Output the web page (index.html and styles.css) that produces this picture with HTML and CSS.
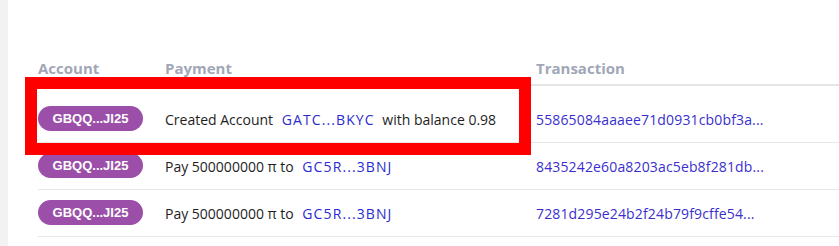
FILE: index.html
```html
<!DOCTYPE html>
<html>
<head>
<meta charset="utf-8">
<link rel="stylesheet" href="styles.css">
</head>
<body>
<div class="page">
  <div class="strip"></div>
  <div class="main">
    <div class="table">
      <div class="row head">
        <div class="cell">Account</div>
        <div class="cell">Payment</div>
        <div class="cell">Transaction</div>
      </div>
      <div class="row first">
        <div class="cell"><span class="badge">GBQQ...JI25</span></div>
        <div class="cell text">Created Account <a class="link">GATC...BKYC</a> with balance 0.98</div>
        <div class="cell text"><a class="hash">55865084aaaee71d0931cb0bf3a...</a></div>
      </div>
      <div class="row">
        <div class="cell"><span class="badge">GBQQ...JI25</span></div>
        <div class="cell text">Pay 500000000 π to <a class="link">GC5R...3BNJ</a></div>
        <div class="cell text"><a class="hash">8435242e60a8203ac5eb8f281db...</a></div>
      </div>
      <div class="row">
        <div class="cell"><span class="badge">GBQQ...JI25</span></div>
        <div class="cell text">Pay 500000000 π to <a class="link">GC5R...3BNJ</a></div>
        <div class="cell text"><a class="hash">7281d295e24b2f24b79f9cffe54...</a></div>
      </div>
    </div>
  </div>
  <div class="highlight"></div>
</div>
</body>
</html>
```

FILE: styles.css
```css
html, body {
  margin: 0;
  padding: 0;
  background: #ffffff;
}
.page {
  position: relative;
  display: flex;
  height: 246px;
  overflow: hidden;
  font-family: "Open Sans", Lato, sans-serif;
}
.strip {
  width: 8px;
  background: #f2f2f2;
  flex: none;
}
.main {
  flex: 1;
  padding: 51px 0 0 30px;
}
.row {
  display: grid;
  grid-template-columns: 127px 371px 1fr;
  align-items: center;
  border-bottom: 1px solid #e8e8e8;
  padding: 10px 0 11px;
  font-size: 14px;
  color: #1e1e1e;
}
.row .text {
  padding-top: 2px;
}
.row.head {
  height: 35px;
  padding: 0;
  box-sizing: border-box;
  border-bottom: 2px solid #e6e6e6;
  font-size: 15px;
  font-weight: 700;
  color: #a1a7b6;
}
.row.first {
  padding-top: 20px;
}
.badge {
  display: inline-block;
  width: 105px;
  height: 25px;
  line-height: 25px;
  border-radius: 13px;
  background: #9b4fa8;
  color: #ffffff;
  font-family: "Liberation Sans", Arial, sans-serif;
  font-weight: 700;
  font-size: 13px;
  text-align: center;
}
.link {
  color: #2b2bcf;
  margin: 0 4px 0 5px;
  letter-spacing: 1.1px;
}
.hash {
  color: #3a2fce;
  letter-spacing: 0.15px;
}
.highlight {
  position: absolute;
  left: 25px;
  top: 77px;
  width: 506px;
  height: 78px;
  box-sizing: border-box;
  border: 12px solid #ff0000;
}
```
